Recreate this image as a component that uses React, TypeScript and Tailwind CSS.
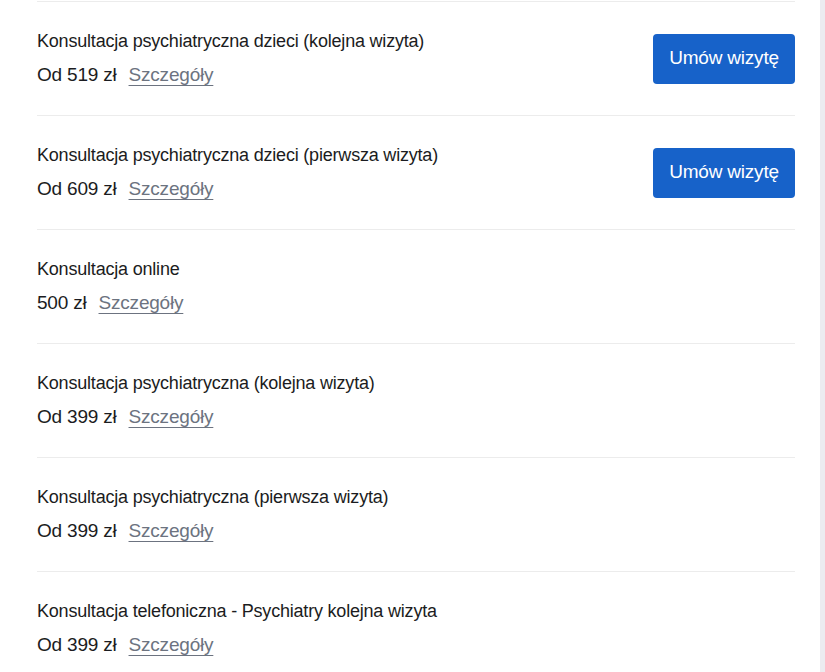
const services = [
  { name: "Konsultacja psychiatryczna dzieci (kolejna wizyta)", price: "Od 519 zł", book: true },
  { name: "Konsultacja psychiatryczna dzieci (pierwsza wizyta)", price: "Od 609 zł", book: true },
  { name: "Konsultacja online", price: "500 zł", book: false },
  { name: "Konsultacja psychiatryczna (kolejna wizyta)", price: "Od 399 zł", book: false },
  { name: "Konsultacja psychiatryczna (pierwsza wizyta)", price: "Od 399 zł", book: false },
  { name: "Konsultacja telefoniczna - Psychiatry kolejna wizyta", price: "Od 399 zł", book: false },
];

export default function App() {
  return (
    <div className="flex h-[672px] w-[825px] overflow-hidden bg-[#ececf0] font-['Liberation_Sans',Arial,sans-serif]">
      <div className="w-[820px] shrink-0 bg-white pl-[37px] pr-[25px] pt-px">
        {services.map((s, i) => (
          <div
            key={i}
            className="flex h-[114px] items-center justify-between border-t border-[#ececec]"
          >
            <div className="flex flex-col gap-[10px] pb-px">
              <div className="text-[18px] leading-[24px] tracking-[-0.2px] text-[#1b1c21]">{s.name}</div>
              <div className="flex items-center gap-[12px] text-[19px] leading-[24px] tracking-[-0.2px] text-[#1b1c21]">
                <span>{s.price}</span>
                <a href="#" className="text-[#6c7380] underline underline-offset-[4px]">
                  Szczegóły
                </a>
              </div>
            </div>
            {s.book && (
              <button className="h-[50px] w-[142px] rounded-[4px] bg-[#1762c9] text-[19px] tracking-[-0.2px] text-white">
                Umów wizytę
              </button>
            )}
          </div>
        ))}
      </div>
    </div>
  );
}
